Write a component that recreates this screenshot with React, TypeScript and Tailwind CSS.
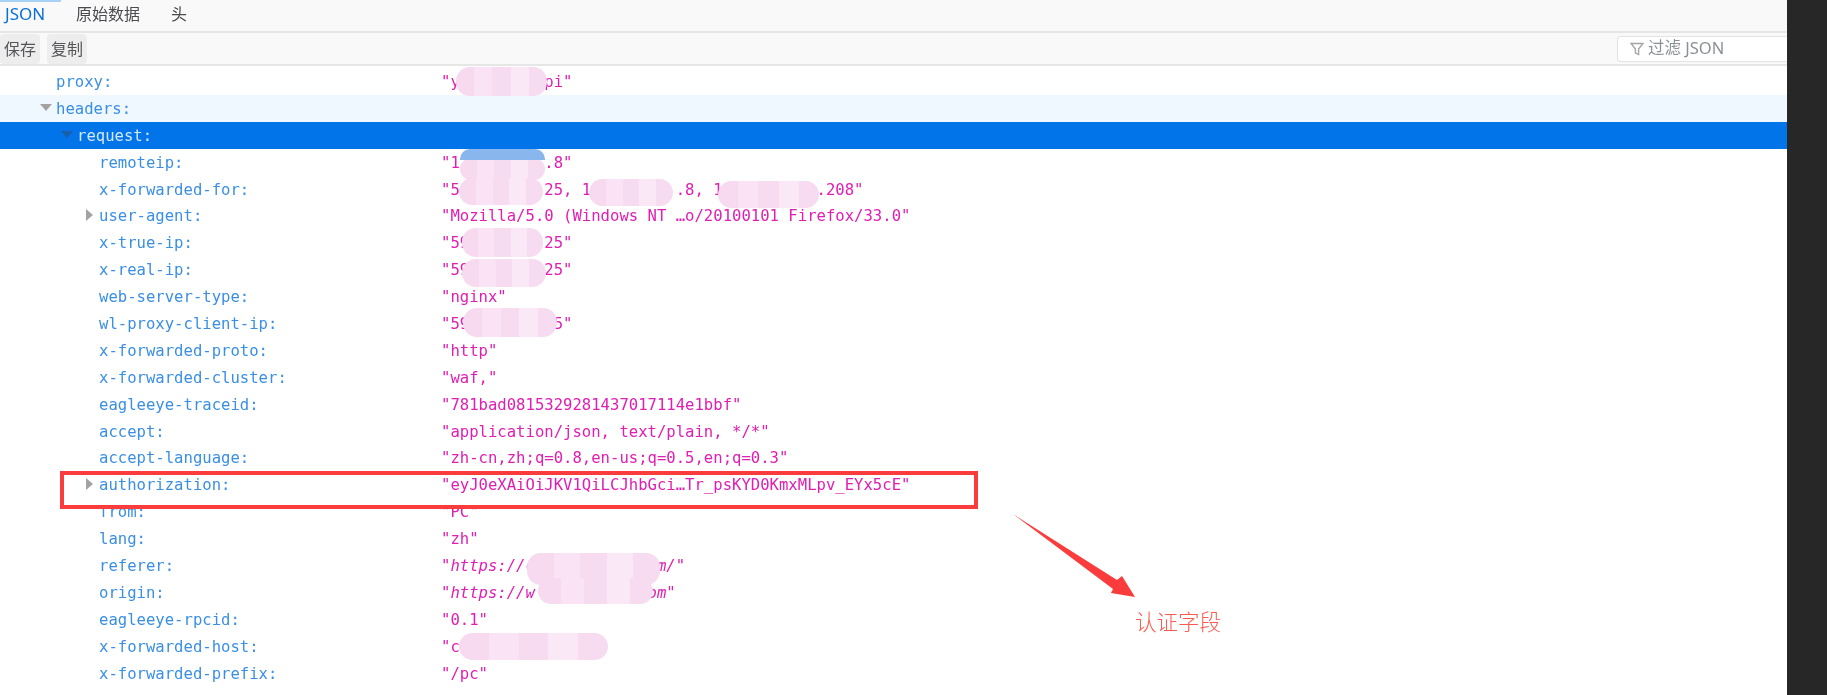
import React from 'react';

type Row = {
    k: string;
    v?: string;
    depth: number;
    toggle?: 'open' | 'closed';
    italic?: boolean;
    kind?: 'hover' | 'selected';
};

const rows: Row[] = [
    { k: 'proxy:', v: '"y         pi"', depth: 1 },
    { k: 'headers:', depth: 1, toggle: 'open', kind: 'hover' },
    { k: 'request:', depth: 2, toggle: 'open', kind: 'selected' },
    { k: 'remoteip:', v: '"1         .8"', depth: 3 },
    { k: 'x-forwarded-for:', v: '"5         25, 1         .8, 1          .208"', depth: 3 },
    { k: 'user-agent:', v: '"Mozilla/5.0 (Windows NT …o/20100101 Firefox/33.0"', depth: 3, toggle: 'closed' },
    { k: 'x-true-ip:', v: '"59        25"', depth: 3 },
    { k: 'x-real-ip:', v: '"59        25"', depth: 3 },
    { k: 'web-server-type:', v: '"nginx"', depth: 3 },
    { k: 'wl-proxy-client-ip:', v: '"59         5"', depth: 3 },
    { k: 'x-forwarded-proto:', v: '"http"', depth: 3 },
    { k: 'x-forwarded-cluster:', v: '"waf,"', depth: 3 },
    { k: 'eagleeye-traceid:', v: '"781bad0815329281437017114e1bbf"', depth: 3 },
    { k: 'accept:', v: '"application/json, text/plain, */*"', depth: 3 },
    { k: 'accept-language:', v: '"zh-cn,zh;q=0.8,en-us;q=0.5,en;q=0.3"', depth: 3 },
    { k: 'authorization:', v: '"eyJ0eXAiOiJKV1QiLCJhbGci…Tr_psKYD0KmxMLpv_EYx5cE"', depth: 3, toggle: 'closed' },
    { k: 'from:', v: '"PC"', depth: 3 },
    { k: 'lang:', v: '"zh"', depth: 3 },
    { k: 'referer:', v: '"https://c             m/"', depth: 3, italic: true },
    { k: 'origin:', v: '"https://w            om"', depth: 3, italic: true },
    { k: 'eagleeye-rpcid:', v: '"0.1"', depth: 3 },
    { k: 'x-forwarded-host:', v: '"c               \'', depth: 3 },
    { k: 'x-forwarded-prefix:', v: '"/pc"', depth: 3 },
];

const depthPad: Record<number, string> = { 1: 'pl-[56px]', 2: 'pl-[77px]', 3: 'pl-[99px]' };

// pink scribbles hiding the ip addresses and hosts
const smudges = [
    'left-[456px] top-[67px] w-[91px] h-[29px]',
    'left-[460px] top-[158px] w-[85px] h-[22px]',
    'left-[459px] top-[178px] w-[84px] h-[27px]',
    'left-[589px] top-[179px] w-[84px] h-[27px]',
    'left-[718px] top-[181px] w-[101px] h-[27px]',
    'left-[462px] top-[228px] w-[81px] h-[29px]',
    'left-[462px] top-[259px] w-[84px] h-[28px]',
    'left-[463px] top-[308px] w-[94px] h-[29px]',
    'left-[527px] top-[553px] w-[133px] h-[32px]',
    'left-[538px] top-[578px] w-[115px] h-[26px]',
    'left-[459px] top-[633px] w-[149px] h-[27px]',
];

const Triangle = ({ dir, color }: { dir: 'open' | 'closed'; color: string }) => (
    <svg width="12" height="12" viewBox="0 0 12 12" className={dir === 'open' ? 'absolute -left-[16px] top-[5px]' : 'absolute -left-[15px] top-[5px]'}>
        {dir === 'open' ? <path d="M0 2h12L6 9z" fill={color} /> : <path d="M2 0l7 6-7 6z" fill={color} />}
    </svg>
);

const JsonRow = ({ row }: { row: Row }) => {
    const bg = row.kind === 'selected' ? 'bg-[#0074e8]' : row.kind === 'hover' ? 'bg-[#eff7ff]' : '';
    const keyColor = row.kind === 'selected' ? 'text-[#d3e8fb]' : 'text-[#3a8fe4]';
    const triColor = row.kind === 'selected' ? '#1a5ea8' : '#a3a3a3';
    return (
        <div className={`flex items-center h-[26.9px] pt-[1px] ${bg}`}>
            <div className={`w-[441px] shrink-0 ${depthPad[row.depth]}`}>
                <span className={`relative block leading-[24px] ${keyColor}`}>
                    {row.toggle && <Triangle dir={row.toggle} color={triColor} />}
                    {row.k}
                </span>
            </div>
            {row.v && (
                <span className={`whitespace-pre leading-[24px] text-[#e11eb2] ${row.italic ? 'italic' : ''}`}>{row.v}</span>
            )}
        </div>
    );
};

export default function App() {
    return (
        <div className="relative flex h-[695px] w-[1827px] overflow-hidden bg-white blur-[0.4px] font-['Noto_Sans','Noto_Sans_CJK_SC',sans-serif]">
            <div className="flex flex-col w-[1787px] shrink-0">
                {/* tabs */}
                <div className="flex items-center h-[33px] pb-[3px] bg-[#f9f9fa] border-b-2 border-[#e6e6e6] text-[16px] text-[#4a4a4f]">
                    <div className="relative flex items-center h-full pl-[5px] w-[76px] text-[17px] text-[#0a6fd8]">
                        <div className="absolute left-0 top-0 h-[2px] w-[61px] bg-[#a9d1f7]" />
                        JSON
                    </div>
                    <div className="w-[95px]">原始数据</div>
                    <div>头</div>
                </div>
                {/* toolbar */}
                <div className="flex items-center h-[33px] bg-[#f9f9fa] border-b-2 border-[#e6e6e6] text-[16px] text-[#55555a]">
                    <div className="flex gap-[7px] flex-1">
                        <button className="w-[40px] h-[30px] rounded-sm bg-[#ededee] text-center">保存</button>
                        <button className="w-[40px] h-[30px] rounded-sm bg-[#ededee] text-center">复制</button>
                    </div>
                    <div className="flex items-center w-[170px] h-[26px] pl-[12px] gap-[4px] bg-white border border-r-0 border-[#e3e3e3] rounded-l-sm text-[16.5px] text-[#8b9096]">
                        <svg width="14" height="14" viewBox="0 0 14 14" fill="none" stroke="#a5a5a5" strokeWidth="1.4">
                            <path d="M1 1.5h12L8.6 7v5.5l-3.2-1.4V7z" />
                        </svg>
                        过滤 JSON
                    </div>
                </div>
                {/* tree */}
                <div className="pt-[2px] font-['DejaVu_Sans_Mono',monospace] text-[15.6px]">
                    {rows.map((row) => (
                        <JsonRow key={row.k} row={row} />
                    ))}
                </div>
            </div>
            <div className="flex-1 bg-[#272727]" />

            {smudges.map((pos) => (
                <div key={pos} className={`absolute flex overflow-hidden rounded-[14px] ${pos}`}>
                    <div className="flex-1 bg-[#f7d9f0]" />
                    <div className="flex-1 bg-[#f9e3f4]" />
                    <div className="flex-1 bg-[#f6dbf1]" />
                    <div className="flex-1 bg-[#fae8f6]" />
                    <div className="flex-1 bg-[#f7dcf1]" />
                </div>
            ))}
            <div className="absolute left-[460px] top-[149px] w-[85px] h-[11px] rounded-t-[10px] bg-[#8ab6ee]" />

            {/* annotation */}
            <div className="absolute left-[60px] top-[471px] w-[918px] h-[38px] border-4 border-[#fb3c3c]" />
            <svg className="absolute left-[1005px] top-[505px]" width="140" height="100" viewBox="0 0 140 100">
                <path d="M8 9L112 75L117 71L130 92L106 88L108 84z" fill="#fb3c3c" />
            </svg>
            <div className="absolute left-[1135px] top-[607px] text-[21.5px] leading-[30px] font-light text-[#fa5a50]">认证字段</div>
        </div>
    );
}
